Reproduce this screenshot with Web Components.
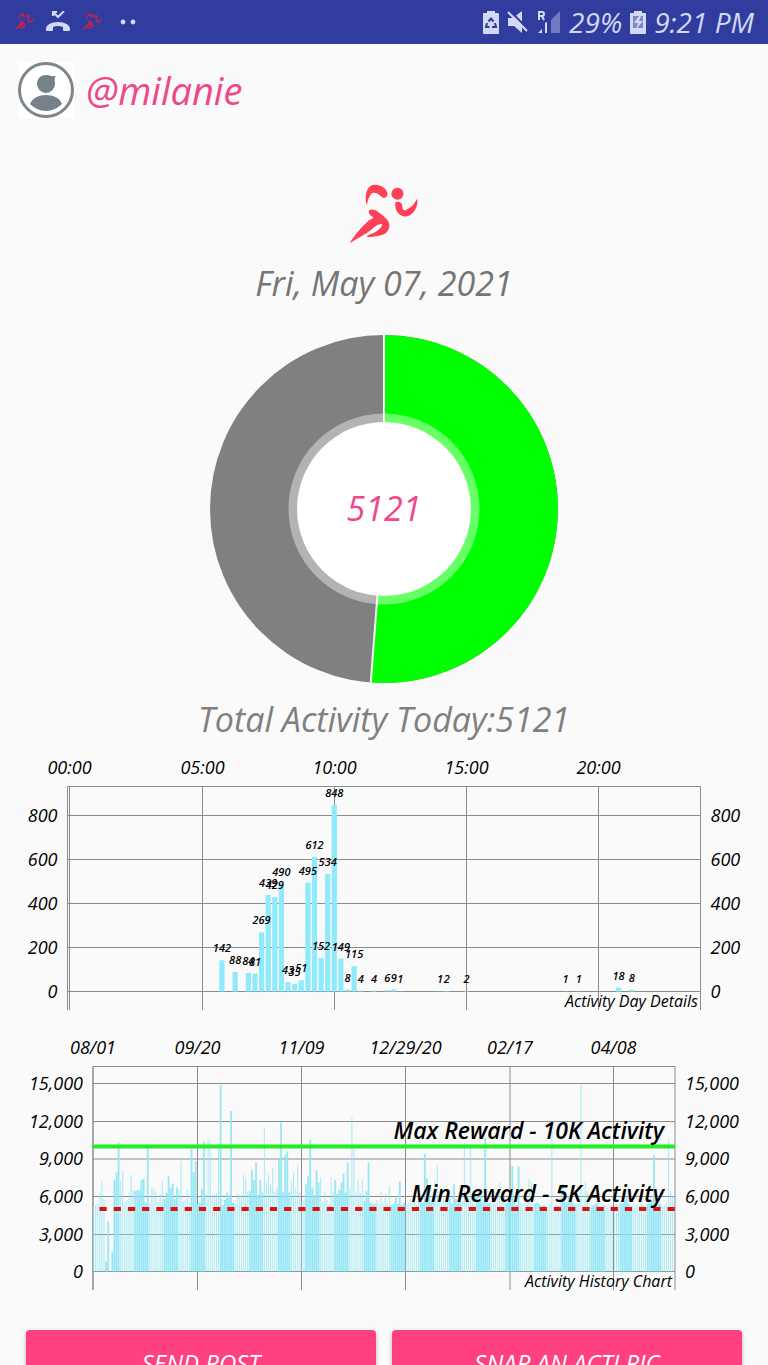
<!DOCTYPE html>
<html lang="en">
<head>
<meta charset="utf-8">
<meta name="viewport" content="width=device-width, initial-scale=1">
<title>Activity</title>
<style>
  body {
    margin: 0;
    background: #fafafa;
    font-family: "Open Sans", "Noto Sans", sans-serif;
    font-style: italic;
  }
</style>
</head>
<body>
<act-screen>
  <act-status-bar slot="status" battery="29%" time="9:21 PM"></act-status-bar>
  <act-profile href="#profile">@milanie</act-profile>
  <act-summary total="5121" goal="10000">
    <span slot="date">Fri, May 07, 2021</span>
    <span slot="caption">Total Activity Today:5121</span>
  </act-summary>
  <act-day-chart label="Activity Day Details"></act-day-chart>
  <act-history-chart label="Activity History Chart"></act-history-chart>
  <act-actions>
    <act-button>SEND POST</act-button>
    <act-button>SNAP AN ACTI PIC</act-button>
  </act-actions>
</act-screen>

<script>
(() => {
  /**
   * Attach an open shadow root holding the given markup.
   *
   * @param {HTMLElement} host
   * @param {string} html
   */
  const attach = (host, html) => {
    const template = document.createElement('template');
    template.innerHTML = html;
    const root = host.attachShadow({ mode: 'open' });
    root.append(template.content.cloneNode(true));
    return root;
  };

  const RUNNER = `
    <path d="M383 106C376 80 380 48 405 45C425 44 440 56 444 68C447 80 436 88 428 82C418 72 408 66 398 70C390 78 386 90 383 106Z"/>
    <circle cx="474" cy="72" r="18"/>
    <path d="M467 100C472 92 487 95 488 106C488 116 490 122 498 121C514 114 526 102 532 87C537 102 528 128 508 137C492 144 472 134 468 112Z"/>
    <path d="M390 120C398 116 412 120 420 128C438 142 452 152 450 170C446 190 430 196 412 198C400 200 388 201 382 200C390 192 404 190 414 182C422 176 430 168 428 162C418 160 408 168 400 176C380 192 354 206 332 219C344 198 366 172 384 156C392 148 400 148 402 142C396 138 386 132 390 120Z"/>`;

  /** Fixed status bar with scrolling content below it. */
  class ActScreen extends HTMLElement {
    constructor() {
      super();
      attach(this, `
        <style>
          :host { display: flex; flex-direction: column; height: 100vh; }
          main { flex: 1; min-height: 0; overflow-y: auto; scrollbar-width: none; }
        </style>
        <slot name="status"></slot>
        <main><slot></slot></main>
      `);
    }
  }

  /** System status bar: notifications on the left, device state on the right. */
  class ActStatusBar extends HTMLElement {
    constructor() {
      super();
      this.root = attach(this, `
        <style>
          :host {
            display: flex;
            justify-content: space-between;
            align-items: center;
            height: 44px;
            padding: 0 14px;
            box-sizing: border-box;
            background: #303d9e;
            color: #d3d8f5;
            font-size: 28px;
            line-height: 44px;
          }
          div { display: flex; align-items: center; }
          .left { gap: 12px; }
          .right { gap: 8px; }
          svg { display: block; fill: currentColor; }
          .run { fill: #c3224f; }
        </style>
        <div class="left">
          <svg class="run" width="20" height="18" viewBox="330 42 206 180" aria-hidden="true">${RUNNER}</svg>
          <svg width="24" height="22" viewBox="0 0 24 22" aria-hidden="true">
            <path d="M0 18c0-4 5-7 12-7s12 3 12 7v1q0 1-1 1h-5q-1 0-1-1v-3q-5-2-10 0v3q0 1-1 1H1q-1 0-1-1z"/>
            <path d="M7 5V1h4M7 1l5 5 6-6" fill="none" stroke="currentColor" stroke-width="2"/>
          </svg>
          <svg class="run" width="20" height="18" viewBox="330 42 206 180" aria-hidden="true">${RUNNER}</svg>
          <svg width="30" height="6" viewBox="0 0 30 6" aria-hidden="true">
            <circle cx="9" cy="3" r="2.400"/><circle cx="19" cy="3" r="2.400"/>
          </svg>
        </div>
        <div class="right">
          <svg width="16" height="23" viewBox="0 0 16 23" aria-hidden="true">
            <path d="M4 2V0h8v2h3q1 0 1 1v19q0 1-1 1H1q-1 0-1-1V3q0-1 1-1z"/>
            <path d="M5.5 10.5L8 7.500L10.500 10.500M12 12l1 4h-4M6.500 16H3l1-4" fill="none" stroke="#303d9e" stroke-width="2"/>
          </svg>
          <svg width="22" height="22" viewBox="0 0 22 22" aria-hidden="true">
            <path d="M1 7h5l9-7v22l-8-7H1z"/>
            <path d="M3 0l18 18" stroke="#303d9e" stroke-width="2"/>
            <path d="M1 1l19 19" stroke="currentColor" stroke-width="2"/>
          </svg>
          <svg width="24" height="22" viewBox="0 0 24 22" aria-hidden="true">
            <path d="M23 0v22h-9V9z" opacity=".4"/>
            <path d="M1 22l4-4v4zM8 12l2-1v11H8z"/>
            <path d="M2 9V1h3q2 0 2 2t-2 2H2m3 0l2 4" fill="none" stroke="currentColor" stroke-width="2"/>
          </svg>
          <span class="battery"></span>
          <svg width="16" height="23" viewBox="0 0 16 23" aria-hidden="true">
            <path d="M4 2V0h8v2h3q1 0 1 1v19q0 1-1 1H1q-1 0-1-1V3q0-1 1-1z"/>
            <path d="M3 5h10v12H3z" fill="#7f88c6"/>
            <path d="M9 5L4 12h4l-2 6 7-8H9l2-5z"/>
          </svg>
          <span class="time"></span>
        </div>
      `);
    }

    connectedCallback() {
      this.root.querySelector('.battery').textContent = this.getAttribute('battery');
      this.root.querySelector('.time').textContent = this.getAttribute('time');
    }
  }

  /** Avatar and user name. */
  class ActProfile extends HTMLElement {
    constructor() {
      super();
      this.root = attach(this, `
        <style>
          :host { display: block; padding: 18px; }
          a {
            display: flex;
            align-items: center;
            gap: 12px;
            color: #f0478a;
            font-size: 38px;
            line-height: 56px;
            text-decoration: none;
          }
          svg { background: #fff; }
        </style>
        <a>
          <svg width="56" height="56" viewBox="0 0 56 56" aria-hidden="true">
            <circle cx="28" cy="28" r="26.500" fill="none" stroke="#7c868c" stroke-width="3"/>
            <path d="M19 22c0-6 4-9 10-9 3 0 5 2 9 1-2 2-1 5-1 8a9 9 0 0 1-18 0z" fill="#76828a"/>
            <path d="M12 42c2-6 9-9 16-9s14 3 16 9q-7 7-16 7t-16-7z" fill="#76828a"/>
          </svg>
          <slot></slot>
        </a>
      `);
    }

    connectedCallback() {
      this.root.querySelector('a').href = this.getAttribute('href') || '#';
    }
  }

  /** Logo, date, progress ring and caption. */
  class ActSummary extends HTMLElement {
    constructor() {
      super();
      this.root = attach(this, `
        <style>
          :host {
            display: flex;
            flex-direction: column;
            align-items: center;
            padding: 48px 0 10px;
            color: #757575;
            font-size: 34px;
            line-height: 40px;
          }
          .logo { width: 70px; height: 60px; fill: #ff4057; }
          .ring { width: 348px; height: 348px; margin: 32px 0 16px; }
          .date { margin-top: 19px; }
          .caption { color: #808080; }
          text { font-size: 34px; fill: #f0478a; text-anchor: middle; }
        </style>
        <svg class="logo" viewBox="330 43 208 178" aria-hidden="true">${RUNNER}</svg>
        <div class="date"><slot name="date"></slot></div>
        <svg class="ring" viewBox="-174 -174 348 348" role="img">
          <circle r="174" fill="#808080"/>
          <path class="done" fill="#0f0"/>
          <circle r="91" fill="none" stroke="#fff" stroke-opacity=".4" stroke-width="9"/>
          <path class="split" fill="none" stroke="#fafafa" stroke-width="2"/>
          <circle r="87" fill="#fff"/>
          <text y="12"></text>
        </svg>
        <div class="caption"><slot name="caption"></slot></div>
      `);
    }

    connectedCallback() {
      const total = Number(this.getAttribute('total'));
      const angle = 2 * Math.PI * total / Number(this.getAttribute('goal'));
      const x = 174 * Math.sin(angle);
      const y = -174 * Math.cos(angle);
      const large = angle > Math.PI ? 1 : 0;
      this.root.querySelector('.done').setAttribute('d', `M0 0V-174A174 174 0 ${large} 1 ${x} ${y}Z`);
      this.root.querySelector('.split').setAttribute('d', `M0 -174V0L${x} ${y}`);
      this.root.querySelector('text').textContent = total;
    }
  }

  const CHART_STYLE = `
    <style>
      :host { display: block; }
      svg { display: block; width: 100%; height: auto; }
      .grid { stroke: #8c8c8c; fill: none; }
      .axis { font-size: 18px; font-weight: 500; }
      .mid { text-anchor: middle; }
      .end { text-anchor: end; }
      .value { font-size: 11px; font-weight: 600; text-anchor: middle; }
      .note { font-size: 16px; font-weight: 500; text-anchor: end; }
      .limit { font-size: 23px; font-weight: 600; text-anchor: end; }
    </style>`;

  /**
   * Grid lines and axis labels shared by both charts.
   *
   * @param {{left: number, right: number, xs: Array, ys: Array}} frame
   */
  const drawFrame = ({ left, right, xs, ys }) => {
    let grid = `M${left} 261V37.5H${right}V261`;
    let labels = '';
    for (const [x, text] of xs) {
      grid += `M${x} 37.5V261`;
      labels += `<text class="axis mid" x="${x}" y="25">${text}</text>`;
    }
    for (const [y, text] of ys) {
      grid += `M${left} ${y}H${right}`;
      labels += `<text class="axis end" x="${left - 10}" y="${y + 6}">${text}</text>`;
      labels += `<text class="axis" x="${right + 10}" y="${y + 6}">${text}</text>`;
    }
    return { grid: `<path class="grid" d="${grid}"/>`, labels };
  };

  // [quarter of an hour, steps]
  const DAY = [
    [23, 142], [25, 88], [27, 84], [28, 81], [29, 269], [30, 439], [31, 429], [32, 490],
    [33, 43], [34, 35], [35, 51], [36, 495], [37, 612], [38, 152], [39, 534], [40, 848],
    [41, 149], [42, 8], [43, 115], [44, 4], [46, 4], [48, 6], [49, 9], [50, 1], [56, 1],
    [57, 2], [60, 2], [75, 1], [77, 1], [83, 18], [85, 8],
  ];

  class ActDayChart extends HTMLElement {
    connectedCallback() {
      const frame = drawFrame({
        left: 67.5,
        right: 700.5,
        xs: [[69.5, '00:00'], [202.5, '05:00'], [334.5, '10:00'], [466.5, '15:00'], [598.5, '20:00']],
        ys: [[242.5, '0'], [198.5, '200'], [154.5, '400'], [110.5, '600'], [66.5, '800']],
      });
      let bars = '';
      let values = '';
      for (const [slot, steps] of DAY) {
        const x = 69.9 + slot * 6.61;
        const height = steps * 0.22;
        bars += `<rect x="${x - 2.6}" y="${242.5 - height}" width="5.2" height="${height}"/>`;
        values += `<text class="value" x="${x}" y="${242.5 - height - 8}">${steps}</text>`;
      }
      attach(this, `${CHART_STYLE}
        <svg viewBox="0 0 768 280">
          ${frame.grid}<g fill="#8eeafc">${bars}</g>${values}${frame.labels}
          <text class="note" x="698" y="258">${this.getAttribute('label')}</text>
        </svg>`);
    }
  }

  // Hundreds of steps per day, from 08/01 on
  const HISTORY = [
    52, 53, 54, 63, 72, 58, 8, 40, 0, 16, 73, 79, 103, 72, 81, 55, 57, 63, 77, 65,
    64, 65, 65, 73, 74, 55, 102, 55, 67, 66, 64, 55, 62, 72, 58, 63, 76, 67, 70, 58,
    67, 65, 88, 56, 57, 65, 54, 98, 79, 88, 54, 55, 66, 104, 62, 106, 105, 61, 62, 62,
    102, 149, 53, 57, 63, 61, 128, 55, 54, 62, 61, 61, 77, 75, 64, 64, 81, 73, 87, 61,
    73, 63, 115, 72, 77, 69, 83, 64, 67, 90, 119, 63, 93, 96, 63, 72, 79, 67, 85, 63,
    55, 58, 70, 76, 105, 67, 61, 81, 71, 75, 55, 64, 57, 54, 75, 64, 73, 62, 65, 71,
    78, 63, 87, 66, 123, 102, 63, 73, 62, 74, 56, 64, 87, 55, 53, 54, 57, 53, 64, 54,
    62, 54, 68, 53, 54, 59, 54, 72, 53, 55, 53, 55, 58, 54, 57, 53, 55, 56, 55, 94,
    74, 65, 56, 60, 72, 85, 55, 54, 57, 55, 67, 58, 54, 70, 58, 55, 63, 56, 103, 57,
    60, 99, 56, 54, 62, 57, 65, 55, 107, 54, 55, 53, 56, 54, 58, 71, 64, 60, 54, 55,
    60, 84, 56, 53, 84, 55, 53, 54, 55, 74, 72, 53, 54, 55, 54, 52, 53, 52, 51, 53,
    111, 52, 54, 53, 58, 70, 58, 54, 60, 57, 55, 53, 54, 55, 149, 54, 71, 64, 53, 52,
    53, 54, 54, 52, 51, 53, 52, 51, 52, 53, 51, 54, 53, 55, 54, 57, 59, 54, 52, 53,
    51, 53, 52, 54, 53, 52, 54, 55, 57, 93, 55, 53, 54, 52, 53, 55, 106, 64, 60,
  ];

  class ActHistoryChart extends HTMLElement {
    connectedCallback() {
      const frame = drawFrame({
        left: 93,
        right: 675,
        xs: [[93, '08/01'], [197.5, '09/20'], [301.5, '11/09'], [405.5, '12/29/20'], [510, '02/17'], [613.5, '04/08']],
        ys: [[242.5, '0'], [205.5, '3,000'], [167.5, '6,000'], [130, '9,000'], [92.5, '12,000'], [54.5, '15,000']],
      });
      let dense = '';
      let pale = '';
      HISTORY.forEach((steps, day) => {
        const x = 93.6 + day * 2.083;
        const band = Math.abs(((x - 113 + 285 + 14) % 28.5) - 14);
        const d = `M${x} 242.500V${242.5 - steps * 1.253}`;
        if (band < 7) {
          dense += d;
        } else {
          pale += d;
        }
      });
      attach(this, `${CHART_STYLE}
        <svg viewBox="0 0 768 280">
          ${frame.grid}
          <path d="${dense}" stroke="#8ce6f5" stroke-opacity=".9" stroke-width="1.8"/>
          <path d="${pale}" stroke="#8ce6f2" stroke-opacity=".7" stroke-width="1.1"/>
          <path d="M93 117.500H675" stroke="#1fee25" stroke-width="4"/>
          <path d="M99.500 180H675" stroke="#dc1212" stroke-width="4" stroke-dasharray="7.2 7"/>
          ${frame.labels}
          <text class="limit" x="664" y="110">Max Reward - 10K Activity</text>
          <text class="limit" x="664" y="173">Min Reward - 5K Activity</text>
          <text class="note" x="672" y="258">${this.getAttribute('label')}</text>
        </svg>`);
    }
  }

  class ActActions extends HTMLElement {
    constructor() {
      super();
      attach(this, `
        <style>
          :host {
            display: grid;
            grid-template-columns: 1fr 1fr;
            gap: 16px;
            padding: 21px 26px;
          }
        </style>
        <slot></slot>
      `);
    }
  }

  class ActButton extends HTMLElement {
    constructor() {
      super();
      attach(this, `
        <style>
          :host { display: block; }
          button {
            width: 100%;
            height: 64px;
            border: 0;
            border-radius: 4px;
            background: #ff4081;
            box-shadow: 0 2px 4px rgba(0, 0, 0, 0.3);
            color: #fff;
            font: inherit;
            font-size: 24px;
          }
        </style>
        <button type="button"><slot></slot></button>
      `);
    }
  }

  customElements.define('act-screen', ActScreen);
  customElements.define('act-status-bar', ActStatusBar);
  customElements.define('act-profile', ActProfile);
  customElements.define('act-summary', ActSummary);
  customElements.define('act-day-chart', ActDayChart);
  customElements.define('act-history-chart', ActHistoryChart);
  customElements.define('act-actions', ActActions);
  customElements.define('act-button', ActButton);
})();
</script>
</body>
</html>
